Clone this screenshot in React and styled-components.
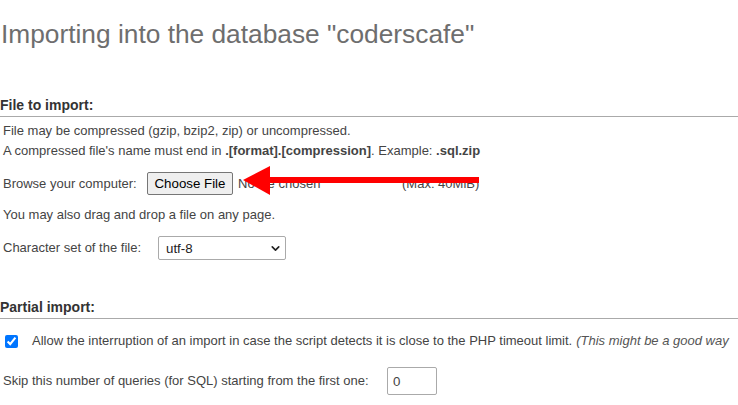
import React from "react";
import styled, { createGlobalStyle } from "styled-components";
import { ChevronDown } from "lucide-react";

const Global = createGlobalStyle`
  html, body { margin: 0; padding: 0; background: #fff; }
  body { font-family: "Liberation Sans", Arial, sans-serif; color: #444; overflow: hidden; }
`;

const Page = styled.div`
  position: relative;
  width: 738px;
  height: 405px;
  overflow: hidden;
  padding-top: 19px;
  box-sizing: border-box;
`;

const Title = styled.h2`
  margin: 0 0 0 1px;
  font-size: 26.3px;
  line-height: 30px;
  font-weight: normal;
  color: #6e6e6e;
  white-space: nowrap;
`;

const Section = styled.section`
  margin-top: ${(p) => p.$top}px;
`;

const Legend = styled.h3`
  margin: 0;
  font-size: 14px;
  line-height: 20px;
  font-weight: bold;
  color: #333;
  padding-bottom: 1px;
  border-bottom: 1px solid #aaa;
  white-space: nowrap;
`;

const Body = styled.div`
  padding-left: 3px;
  font-size: 13px;
  line-height: 20px;
  color: #444;
  white-space: nowrap;
`;

const Line = styled.div`
  margin-top: ${(p) => p.$top || 0}px;
  height: ${(p) => p.$h || 20}px;
  display: flex;
  align-items: center;
`;

const Label = styled.span`
  width: ${(p) => p.$w}px;
  flex: none;
`;

const FileButton = styled.button`
  width: 86px;
  height: 23px;
  box-sizing: border-box;
  border: 1px solid #767676;
  border-radius: 2px;
  background: #efefef;
  font: 13.3px "Liberation Sans", Arial, sans-serif;
  color: #000;
  padding: 0;
  margin-right: 5px;
`;

const Muted = styled.span`
  color: #444;
  width: ${(p) => p.$w || "auto"};
  display: inline-block;
`;

const SelectWrap = styled.span`
  position: relative;
  display: inline-flex;
  width: 128px;
  height: 24px;
`;

const Select = styled.select`
  appearance: none;
  width: 100%;
  height: 100%;
  box-sizing: border-box;
  border: 1px solid #aaa;
  border-radius: 2px;
  background: #fff;
  padding: 0 0 0 7px;
  font: 13.3px "Liberation Sans", Arial, sans-serif;
  color: #222;
`;

const Chevron = styled(ChevronDown)`
  position: absolute;
  right: 4px;
  top: 6px;
  pointer-events: none;
  color: #222;
`;

const Check = styled.input`
  width: 13px;
  height: 13px;
  margin: 0 14px 0 2px;
  accent-color: #0075ff;
`;

const Note = styled.em`
  color: #555;
  margin-left: 4px;
`;

const NumInput = styled.input`
  width: 50px;
  height: 28px;
  box-sizing: border-box;
  border: 1px solid #aaa;
  border-radius: 2px;
  padding: 0 0 0 5px;
  font: 13.3px "Liberation Sans", Arial, sans-serif;
  color: #444;
`;

const Arrow = styled.svg`
  position: absolute;
  left: 0;
  top: 0;
  pointer-events: none;
`;

export default function App() {
  return (
    <>
      <Global />
      <Page>
        <Title>Importing into the database "coderscafe"</Title>

        <Section $top={46}>
          <Legend>File to import:</Legend>
          <Body>
            <Line $top={4}>File may be compressed (gzip, bzip2, zip) or uncompressed.</Line>
            <Line>
              A compressed file's name must end in&nbsp;<b>.[format].[compression]</b>. Example:&nbsp;<b>.sql.zip</b>
            </Line>
            <Line $top={11} $h={23}>
              <Label $w={144}>Browse your computer:</Label>
              <FileButton type="button">Choose File</FileButton>
              <Muted $w="164px">No file chosen</Muted>
              <Muted>(Max: 40MiB)</Muted>
            </Line>
            <Line $top={10}>You may also drag and drop a file on any page.</Line>
            <Line $top={11} $h={24}>
              <Label $w={155}>Character set of the file:</Label>
              <SelectWrap>
                <Select defaultValue="utf-8">
                  <option value="utf-8">utf-8</option>
                </Select>
                <Chevron size={13} strokeWidth={3} />
              </SelectWrap>
            </Line>
          </Body>
        </Section>

        <Section $top={37}>
          <Legend>Partial import:</Legend>
          <Body>
            <Line $top={12}>
              <Check type="checkbox" defaultChecked />
              Allow the interruption of an import in case the script detects it is close to the PHP timeout limit.
              <Note>(This might be a good way</Note>
            </Line>
            <Line $top={16} $h={28}>
              <Label $w={384}>Skip this number of queries (for SQL) starting from the first one:</Label>
              <NumInput type="text" defaultValue="0" />
            </Line>
          </Body>
        </Section>

        <Arrow width="738" height="405" viewBox="0 0 738 405">
          <rect x="266" y="177" width="213" height="6" fill="#ff0000" />
          <polygon points="243,180 270,166 270,195" fill="#ff0000" />
        </Arrow>
      </Page>
    </>
  );
}
